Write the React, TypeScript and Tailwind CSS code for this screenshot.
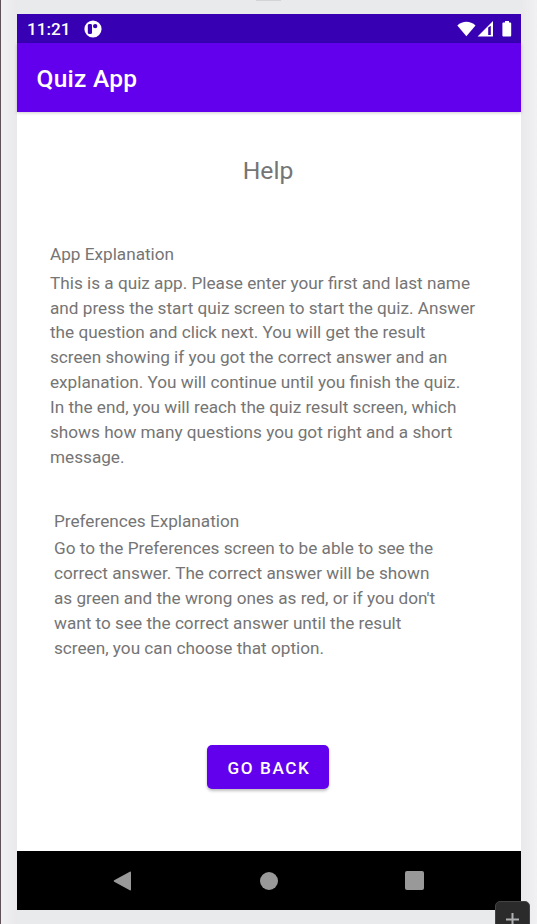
const explanation = [
  "This is a quiz app. Please enter your first and last name",
  "and press the start quiz screen to start the quiz. Answer",
  "the question and click next. You will get the result",
  "screen showing if you got the correct answer and an",
  "explanation. You will continue until you finish the quiz.",
  "In the end, you will reach the quiz result screen, which",
  "shows how many questions you got right and a short",
  "message.",
];

const preferences = [
  "Go to the Preferences screen to be able to see the",
  "correct answer. The correct answer will be shown",
  "as green and the wrong ones as red, or if you don't",
  "want to see the correct answer until the result",
  "screen, you can choose that option.",
];

function StatusBar() {
  return (
    <div className="flex h-[29px] items-center bg-[#3700b3] pl-[10px] pr-[9px] text-white">
      <span className="w-[57px] pt-[2px] text-[17.15px] font-medium leading-none">11:21</span>
      <svg width="18" height="18" viewBox="0 0 18 18">
        <circle cx="9" cy="9" r="8.6" fill="white" />
        <path d="M3.8 5.4Q4 4 5.4 4h1.2Q8 4 8 5.4v7Q8 14 6.6 14H5.4Q3.8 14 3.8 12.4z" fill="#3700b3" />
        <circle cx="11.2" cy="6.1" r="2.2" fill="#3700b3" />
      </svg>
      <div className="ml-auto flex items-center">
        <svg width="19" height="16" viewBox="0 0 19 16">
          <path d="M0.3 4.4C5.5-.4 13.3-.4 18.5 4.4L9.4 15.2z" fill="white" />
        </svg>
        <svg className="ml-[1px]" width="17" height="16" viewBox="0 0 17 16">
          <path fillRule="evenodd" d="M16 0v15.4H.6z M11.2 6.4v7.7h2.6V4.8z" fill="white" />
        </svg>
        <svg className="ml-[8px]" width="10" height="16" viewBox="0 0 10 16">
          <path d="M3 0h4v1.6h1.3q.9 0 .9.9v12q0 .9-.9.9H1.3q-.9 0-.9-.9v-12q0-.9.9-.9H3z" fill="white" />
        </svg>
      </div>
    </div>
  );
}

function Section({ title, lines, titleHeight }: { title: string; lines: string[]; titleHeight: string }) {
  return (
    <section className="whitespace-nowrap text-[17.18px]">
      <h2 className={`${titleHeight} leading-[25px]`}>{title}</h2>
      {lines.map((line) => (
        <p key={line} className="leading-[24.9px]">{line}</p>
      ))}
    </section>
  );
}

export default function App() {
  return (
    <div className="relative h-[924px] w-[537px] overflow-hidden bg-[#e9eaec] pt-[14px] font-['Roboto',sans-serif] antialiased">
      <div className="absolute inset-y-0 left-0 w-[17px] border-l border-[#5f5358] bg-linear-to-r from-[#f1f1f3] to-[#e9e9eb]" />
      <div className="absolute inset-y-0 right-0 w-[16px] bg-linear-to-r from-[#e9e9eb] to-[#f1f1f3]" />
      <div className="absolute left-[256px] top-0 h-[1px] w-[25px] bg-[#d3d4d6]" />
      <div className="relative ml-[17px] flex h-[896px] w-[504px] flex-col bg-white text-[#757575]">
        <StatusBar />
        <header className="flex h-[69px] items-center bg-[#6200ee] pl-[19.5px] pt-[3px] text-[24.5px] font-medium tracking-[0.25px] text-white shadow-[0_1px_3px_rgba(0,0,0,0.2)]">
          Quiz App
        </header>
        <main className="flex flex-1 flex-col">
          <h1 className="mt-[44px] h-[30px] pr-[2px] text-center text-[24.7px] leading-[30px]">Help</h1>
          <div className="mt-[56px] pl-[33px]">
            <Section title="App Explanation" lines={explanation} titleHeight="h-[28.6px]" />
          </div>
          <div className="mt-[39px] pl-[37px]">
            <Section title="Preferences Explanation" lines={preferences} titleHeight="h-[27.4px]" />
          </div>
          <button className="mb-[62px] ml-[190px] mt-auto h-[44px] w-[122px] rounded-[5px] bg-[#6200ee] pl-[2px] pt-[3px] text-[17.15px] font-medium tracking-[0.0943em] text-white shadow-[0_2px_3px_rgba(0,0,0,0.25)]">
            GO BACK
          </button>
        </main>
        <nav className="flex h-[59px] items-center bg-black">
          <svg className="ml-[96px]" width="20" height="20" viewBox="0 0 20 20">
            <path d="M1.2 9.2 16.8.7Q18 .3 18 1.5v17q0 1.2-1.2.8L1.2 10.8Q0 10 1.2 9.2z" fill="#999" />
          </svg>
          <div className="ml-[127px] h-[18px] w-[18px] rounded-full bg-[#999]" />
          <div className="ml-[127px] h-[19px] w-[19px] rounded-[2px] bg-[#999]" />
        </nav>
      </div>
      <div className="absolute left-[495px] top-[901px] flex h-[40px] w-[35px] justify-center rounded-[5px] border border-[#444] bg-[#2b2b2b] pt-[11px]">
        <svg width="13" height="13" viewBox="0 0 13 13">
          <path d="M6.5 0v13M0 6.5h13" stroke="#afb1b3" strokeWidth="2" />
        </svg>
      </div>
    </div>
  );
}
